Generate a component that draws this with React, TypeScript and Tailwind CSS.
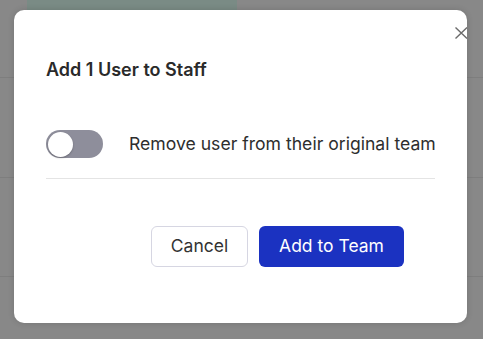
import React, { useState } from "react";

const font = { fontFamily: "Inter, 'Noto Sans', sans-serif" };

export default function App() {
  const [removeFromTeam, setRemoveFromTeam] = useState(false);

  return (
    <div className="relative h-[339px] w-[483px] overflow-hidden bg-[#888888]" style={font}>
      {/* page behind the overlay */}
      <div className="flex flex-col">
        <div className="h-[78px] border-b border-[#7e7e7e]">
          <div className="ml-[27px] h-[10px] w-[210px] bg-[#7a8b85]" />
        </div>
        <div className="h-[100px] border-b border-[#7e7e7e]" />
        <div className="h-[99px] border-b border-[#7e7e7e]" />
      </div>

      {/* Modal */}
      <div className="absolute left-[14px] top-[10px] h-[313px] w-[453px] overflow-hidden rounded-[10px] bg-white shadow-[0_0_6px_rgba(0,0,0,0.15)]">
        <button className="absolute left-[441px] top-[17px] h-[12px] w-[14px]">
          <svg width="14" height="12" viewBox="0 0 14 12" fill="none">
            <path d="M0.5 0.5 L12 11.5 M12 0.5 L0.5 11.5" stroke="#6b6b6b" strokeWidth="1.4" />
          </svg>
        </button>

        <div className="flex flex-col px-8 pt-[46px]">
          <h2 className="text-[18px] font-semibold leading-[28px] text-[#2a2a2a]">
            Add 1 User to Staff
          </h2>

          <div className="mt-[46px] flex items-center gap-[26px] border-b border-[#e4e4e4] pb-5">
            <button
              onClick={() => setRemoveFromTeam(!removeFromTeam)}
              className={`relative h-[28px] w-[57px] shrink-0 rounded-full ${
                removeFromTeam ? "bg-[#1b32c1]" : "bg-[#8e8e9b]"
              }`}
            >
              <span
                className={`absolute top-[1.5px] h-[25px] w-[25px] rounded-full bg-white shadow-[0_1px_2px_rgba(0,0,0,0.25)] ${
                  removeFromTeam ? "left-[30px]" : "left-[1.5px]"
                }`}
              />
            </button>
            <span className="whitespace-nowrap text-[17.6px] leading-[28px] text-[#2e2e2e]">
              Remove user from their original team
            </span>
          </div>

          <div className="mr-[31px] mt-[47px] flex justify-end gap-[11px]">
            <button className="h-[41px] w-[97px] rounded-md border border-[#d6d6e2] bg-white text-[17.5px] text-[#333333]">
              Cancel
            </button>
            <button className="h-[41px] w-[145px] rounded-md bg-[#1b32c1] text-[17.5px] text-white">
              Add to Team
            </button>
          </div>
        </div>
      </div>
    </div>
  );
}
